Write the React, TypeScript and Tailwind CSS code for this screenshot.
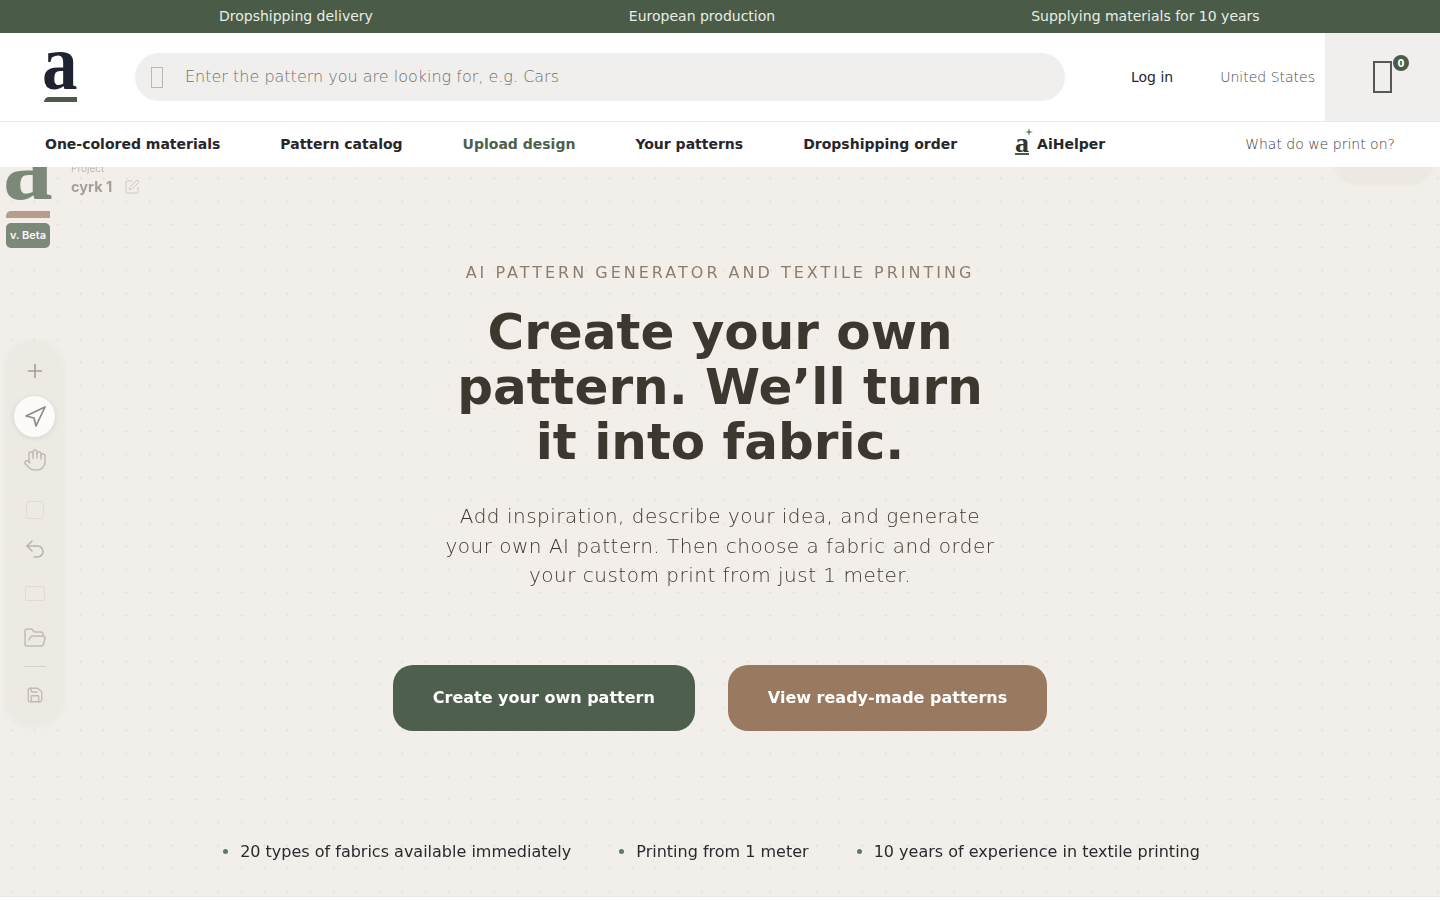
import { Hand, Navigation, Plus, Undo2, FolderOpen, Save, SquarePen } from "lucide-react";

const sans = "font-['DejaVu_Sans',sans-serif]";

const topItems = ["Dropshipping delivery", "European production", "Supplying materials for 10 years"];
const navItems = ["One-colored materials", "Pattern catalog", "Upload design", "Your patterns", "Dropshipping order"];
const bullets = ["20 types of fabrics available immediately", "Printing from 1 meter", "10 years of experience in textile printing"];

function Logo() {
  return (
    <div className="flex w-[33px] flex-col">
      <div className="-ml-[2px] h-[45px] origin-left scale-x-[0.91] font-['Liberation_Serif',serif] text-[78px] leading-[22px] font-bold text-[#1f2230]">a</div>
      <div className="h-[5px] rounded-tl-[5px] bg-[#4a5c48]" />
    </div>
  );
}

function Backdrop() {
  return (
    <div className="pointer-events-none absolute inset-0 overflow-hidden">
      <div className="absolute top-[-20px] left-[6px] w-[44px] opacity-70 blur-[0.6px]">
        <div className="-ml-[3px] h-[64px] origin-left scale-x-[0.96] font-['Liberation_Serif',serif] text-[104px] leading-[34px] font-bold text-[#4a5c48]">a</div>
        <div className="h-[7px] rounded-tl-[5px] bg-[#9d7b64]" />
        <div className="mt-[5px] flex h-[25px] items-center justify-center rounded-[5px] bg-[#4a5c48] font-['Inter',sans-serif] text-[11px] font-semibold text-white">v. Beta</div>
      </div>
      <div className="absolute top-[-4px] left-[71px] opacity-50 blur-[0.5px]">
        <div className="font-['Inter',sans-serif] text-[10px] leading-none text-[#8a8178]">Project</div>
        <div className="mt-[3px] flex items-center gap-[12px] font-['Inter',sans-serif] text-[14.5px] font-bold text-[#5a5148]">
          cyrk 1 <SquarePen size={16} strokeWidth={1.5} className="opacity-50" />
        </div>
      </div>
      <div className="absolute top-[-40px] right-[5px] h-[58px] w-[102px] rounded-[24px] bg-[#ebe7e1] opacity-80 blur-[1px]" />
      <div className="absolute top-[176px] left-[7px] flex h-[382px] w-[55px] flex-col items-center rounded-[24px] bg-[#ece8e2] pt-[17px] text-[#8f8a84] opacity-80 shadow-[0_0_8px_rgba(90,80,70,0.08)] blur-[0.6px]">
        <Plus size={22} strokeWidth={1.75} />
        <div className="absolute top-[53px] left-[7px] flex h-[41px] w-[41px] items-center justify-center rounded-full bg-white shadow-[0_1px_5px_rgba(0,0,0,0.12)]">
          <Navigation size={24} strokeWidth={1.75} className="text-[#77726c]" />
        </div>
        <Hand size={24} strokeWidth={1.5} className="mt-[66px] opacity-60" />
        <div className="mt-[29px] h-[18px] w-[18px] rounded-[3px] border border-[#b5b0a9] opacity-30" />
        <Undo2 size={24} strokeWidth={1.5} className="mt-[18px] opacity-70" />
        <div className="mt-[25px] h-[15px] w-[20px] rounded-[2px] border border-[#b5b0a9] opacity-30" />
        <FolderOpen size={24} strokeWidth={1.5} className="mt-[25px] opacity-60" />
        <div className="mt-[16px] h-px w-[22px] bg-[#cfcac4]" />
        <Save size={18} strokeWidth={1.75} className="mt-[19px] opacity-60" />
      </div>
    </div>
  );
}

export default function App() {
  return (
    <div className={`${sans} min-h-[900px] bg-white`}>
      <div className="flex h-[33px] items-center gap-[256px] bg-[#4a5c48] pl-[219px] text-[14px] text-[#e9ede6]">
        {topItems.map((t) => (
          <span key={t}>{t}</span>
        ))}
      </div>

      <header className="flex h-[89px] items-stretch border-b border-[#e9e9e6] bg-white">
        <div className="flex w-[135px] items-center pl-[44px]">
          <Logo />
        </div>
        <div className="flex flex-1 items-center">
          <div className="flex h-[48px] w-[930px] items-center rounded-full bg-[#f0efed] pl-[16px]">
            <div className="h-[21px] w-[12px] border-[1.5px] border-[#b8b7b3]" />
            <span className="ml-[22px] text-[16px] font-extralight text-[#70706c]">Enter the pattern you are looking for, e.g. Cars</span>
          </div>
        </div>
        <div className="flex items-center">
          <span className="text-[14px] text-[#26262b]">Log in</span>
          <span className="mr-[10px] ml-[47px] text-[14px] font-extralight text-[#4c4c4c]">United States</span>
        </div>
        <div className="relative flex w-[115px] items-center justify-center bg-[#f0efed]">
          <div className="h-[32px] w-[19px] border-[2px] border-[#55594f]" />
          <span className="absolute top-[22px] left-[68px] flex h-[16px] w-[16px] items-center justify-center rounded-full bg-[#4a5c48] text-[10px] font-bold text-white">0</span>
        </div>
      </header>

      <nav className="flex h-[45px] items-center bg-white pr-[45px] pl-[45px] text-[14px] font-bold text-[#26262b]">
        <div className="flex items-center gap-[60px]">
          {navItems.map((n) => (
            <span key={n} className={n === "Upload design" ? "text-[#4f5f4e]" : ""}>
              {n}
            </span>
          ))}
        </div>
        <div className="ml-[56px] flex items-center gap-[6px]">
          <span className="relative flex w-[18px] flex-col items-center">
            <span className="font-['Liberation_Serif',serif] text-[28px] leading-[17px] font-bold text-[#33352f]">a</span>
            <span className="mt-[2px] h-[2px] w-[14px] bg-[#4a5c48]" />
            <svg viewBox="0 0 10 10" className="absolute top-[-6px] right-[-2px] h-[8px] w-[8px] fill-[#5f6b58]">
              <path d="M5 0 6 4 10 5 6 6 5 10 4 6 0 5 4 4Z" />
            </svg>
          </span>
          <span>AiHelper</span>
        </div>
        <span className="ml-auto text-[14px] font-extralight text-[#3b3b3b]">What do we print on?</span>
      </nav>

      <main className="relative h-[730px] overflow-hidden border-b border-[#ebe8e3] bg-[#f2eee9] bg-[radial-gradient(rgba(120,110,100,0.09)_1px,transparent_1.2px)] bg-size-[23px_23px]">
        <Backdrop />
        <div className="relative flex flex-col items-center pt-[96px] text-center">
          <p className="text-[16px] leading-[19px] tracking-[3px] text-[#8f7d6b]">AI PATTERN GENERATOR AND TEXTILE PRINTING</p>
          <h1 className="mt-[23px] w-[560px] text-[50px] leading-[55px] font-bold text-[#3d382f]">
            Create your own pattern. We’ll turn it into fabric.
          </h1>
          <p className="mt-[32px] w-[570px] text-[20px] leading-[29.5px] font-extralight tracking-[0.5px] text-[#3d382f]">
            Add inspiration, describe your idea, and generate your own AI pattern. Then choose a fabric and order your custom print from just 1 meter.
          </p>
          <div className="mt-[74px] flex gap-[33px] text-[16px] font-bold text-white">
            <button className="h-[66px] rounded-[20px] bg-[#4f5f4e] px-[40px]">Create your own pattern</button>
            <button className="h-[66px] rounded-[20px] bg-[#9a7961] px-[40px]">View ready-made patterns</button>
          </div>
          <ul className="mt-[109px] flex gap-[48px] pr-[17px] text-[16px] text-[#2a2a2e]">
            {bullets.map((b) => (
              <li key={b} className="flex items-center gap-[12px]">
                <span className="h-[5px] w-[5px] rounded-full bg-[#5f7a60]" />
                {b}
              </li>
            ))}
          </ul>
        </div>
      </main>
    </div>
  );
}
